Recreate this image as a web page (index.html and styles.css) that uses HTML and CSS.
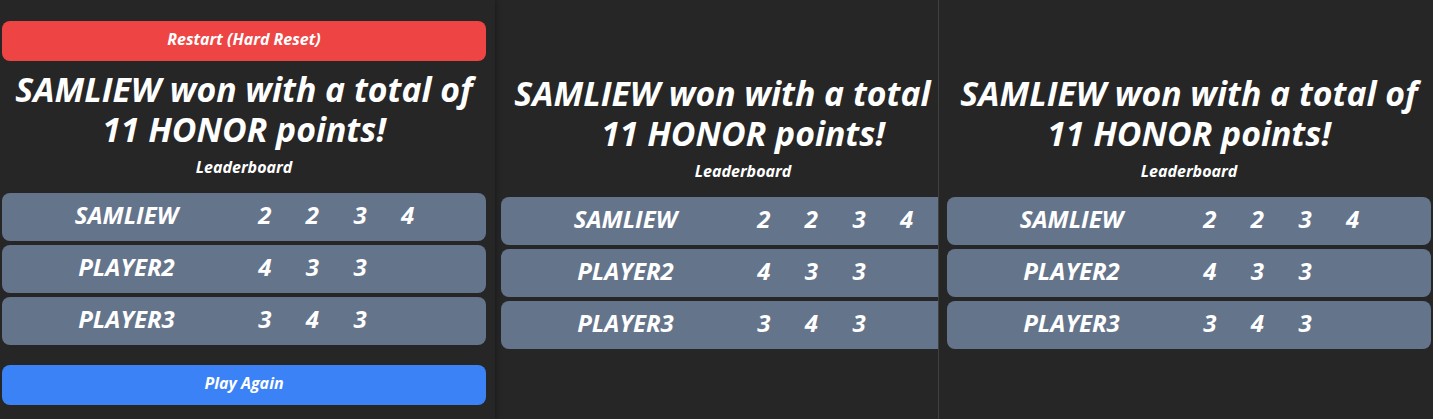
FILE: index.html
```html
<html>
    <head>
        <title>Game Over</title>
        <link rel="stylesheet" href="styles.css">
    </head>
    <body>
        <div class="screen">
            <div class="panel panel-first">
                <button class="btn btn-red">Restart (Hard Reset)</button>
                <h1 class="result">SAMLIEW won with a total of 11 HONOR points!</h1>
                <h3 class="board-title">Leaderboard</h3>
                <div class="row">
                    <div class="name">SAMLIEW</div>
                    <div class="scores"><span>2</span><span>2</span><span>3</span><span>4</span></div>
                </div>
                <div class="row">
                    <div class="name">PLAYER2</div>
                    <div class="scores"><span>4</span><span>3</span><span>3</span></div>
                </div>
                <div class="row">
                    <div class="name">PLAYER3</div>
                    <div class="scores"><span>3</span><span>4</span><span>3</span></div>
                </div>
                <button class="btn btn-blue">Play Again</button>
            </div>
            <div class="panel panel-second">
                <h1 class="result">SAMLIEW won with a total of 11 HONOR points!</h1>
                <h3 class="board-title">Leaderboard</h3>
                <div class="row">
                    <div class="name">SAMLIEW</div>
                    <div class="scores"><span>2</span><span>2</span><span>3</span><span>4</span></div>
                </div>
                <div class="row">
                    <div class="name">PLAYER2</div>
                    <div class="scores"><span>4</span><span>3</span><span>3</span></div>
                </div>
                <div class="row">
                    <div class="name">PLAYER3</div>
                    <div class="scores"><span>3</span><span>4</span><span>3</span></div>
                </div>
            </div>
            <div class="panel panel-third">
                <h1 class="result">SAMLIEW won with a total of 11 HONOR points!</h1>
                <h3 class="board-title">Leaderboard</h3>
                <div class="row">
                    <div class="name">SAMLIEW</div>
                    <div class="scores"><span>2</span><span>2</span><span>3</span><span>4</span></div>
                </div>
                <div class="row">
                    <div class="name">PLAYER2</div>
                    <div class="scores"><span>4</span><span>3</span><span>3</span></div>
                </div>
                <div class="row">
                    <div class="name">PLAYER3</div>
                    <div class="scores"><span>3</span><span>4</span><span>3</span></div>
                </div>
            </div>
        </div>
    </body>
</html>
```

FILE: styles.css
```css
html, body {
margin: 0;
height: 100%;
overflow: hidden;
background-color: #262626;
}
.screen {
display: flex;
height: 419px;
font-family: "Open Sans", "Noto Sans", sans-serif;
font-style: italic;
color: white;
}
.panel {
flex: none;
box-sizing: border-box;
overflow: hidden;
background-color: #262626;
}
.panel-first {
width: 495px;
padding: 21px 0 0 2px;
box-shadow: 2px 0 4px rgba(0,0,0,0.25);
position: relative;
}
.panel-second {
width: 444px;
padding: 73px 0 0 6px;
border-right: 1px solid #404040;
}
.panel-third {
width: 494px;
padding: 73px 0 0 8px;
}
.btn {
display: block;
width: 484px;
height: 40px;
padding: 0 0 4px;
border: none;
border-radius: 8px;
color: white;
font: italic 700 16px "Open Sans", sans-serif;
}
.btn-red {
background-color: #ef4444;
}
.btn-blue {
background-color: #3b82f6;
margin-top: 20px;
}
.result {
width: 484px;
margin: 8px 0 0;
font-size: 33.8px;
line-height: 40px;
font-weight: 700;
text-align: center;
}
.panel-second .result, .panel-third .result {
margin-top: 0;
}
.board-title {
width: 484px;
margin: 0;
height: 36px;
padding-top: 8px;
font-size: 16px;
line-height: 20px;
font-weight: 700;
text-align: center;
}
.row {
box-sizing: border-box;
display: flex;
align-items: center;
width: 484px;
height: 48px;
margin-bottom: 4px;
border-radius: 8px;
background-color: #64748b;
font-size: 24px;
font-weight: 700;
padding-bottom: 6px;
}
.name {
width: 229px;
margin-left: 10px;
text-align: center;
}
.scores {
display: flex;
}
.scores span {
width: 47.6px;
text-align: center;
}
```
